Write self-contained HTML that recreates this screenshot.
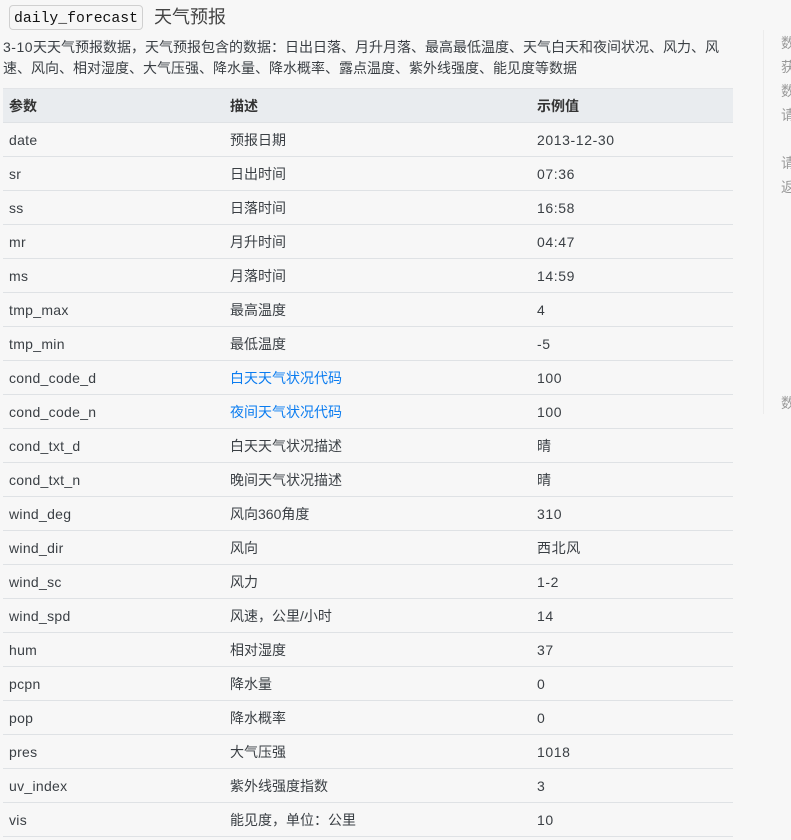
<!DOCTYPE html>
<html lang="zh"><head><meta charset="utf-8"><title>daily_forecast</title>
<style>
html,body{margin:0;padding:0;width:791px;height:840px;overflow:hidden;background:#f7f7f7}
body{position:relative;font-family:"Liberation Sans","Noto Sans CJK SC",sans-serif;font-size:14px;color:#3a3f44}
code{position:absolute;left:9px;top:5px;width:134px;height:25px;box-sizing:border-box;border:1px solid #d0d0d0;border-radius:4px;background:#f6f6f6;font:14.75px/26px "Liberation Mono",monospace;color:#111;text-align:center;overflow:hidden}
h3{position:absolute;left:154px;top:5px;margin:0;font-weight:400;font-size:18px;line-height:24px;color:#444}
p{position:absolute;left:3px;top:37px;margin:0;line-height:21px;white-space:nowrap;width:730px}
p span{letter-spacing:.5px}
table{position:absolute;left:3px;top:88px;width:730px;border-collapse:collapse;table-layout:fixed}
th,td{height:33px;padding:0 6px;border-bottom:1px solid #dfe2e5;text-align:left;white-space:nowrap;line-height:20px}
th{background:#e9ecef;border-top:1px solid #e2e4e7;font-weight:700;color:#333;height:33px}
td:first-child{letter-spacing:.3px}
td:nth-child(3){letter-spacing:.6px}
a{color:#0a7cf0;text-decoration:none}
.r{position:absolute;left:763px;top:30px;width:1px;height:384px;background:#ececec}
.s{position:absolute;left:781px;color:#999;line-height:24px;height:24px;width:10px;overflow:hidden;white-space:nowrap}
</style></head><body>
<code>daily_forecast</code>
<h3>天气预报</h3>
<p><span>3-10</span>天天气预报数据，天气预报包含的数据：日出日落、月升月落、最高最低温度、天气白天和夜间状况、风力、风<br>速、风向、相对湿度、大气压强、降水量、降水概率、露点温度、紫外线强度、能见度等数据</p>
<table><colgroup><col style="width:221px"><col style="width:307px"><col style="width:202px"></colgroup>
<thead><tr><th>参数</th><th>描述</th><th>示例值</th></tr></thead><tbody>
<tr><td>date</td><td>预报日期</td><td>2013-12-30</td></tr>
<tr><td>sr</td><td>日出时间</td><td>07:36</td></tr>
<tr><td>ss</td><td>日落时间</td><td>16:58</td></tr>
<tr><td>mr</td><td>月升时间</td><td>04:47</td></tr>
<tr><td>ms</td><td>月落时间</td><td>14:59</td></tr>
<tr><td>tmp_max</td><td>最高温度</td><td>4</td></tr>
<tr><td>tmp_min</td><td>最低温度</td><td>-5</td></tr>
<tr><td>cond_code_d</td><td><a href="#">白天天气状况代码</a></td><td>100</td></tr>
<tr><td>cond_code_n</td><td><a href="#">夜间天气状况代码</a></td><td>100</td></tr>
<tr><td>cond_txt_d</td><td>白天天气状况描述</td><td>晴</td></tr>
<tr><td>cond_txt_n</td><td>晚间天气状况描述</td><td>晴</td></tr>
<tr><td>wind_deg</td><td>风向360角度</td><td>310</td></tr>
<tr><td>wind_dir</td><td>风向</td><td>西北风</td></tr>
<tr><td>wind_sc</td><td>风力</td><td>1-2</td></tr>
<tr><td>wind_spd</td><td>风速，公里/小时</td><td>14</td></tr>
<tr><td>hum</td><td>相对湿度</td><td>37</td></tr>
<tr><td>pcpn</td><td>降水量</td><td>0</td></tr>
<tr><td>pop</td><td>降水概率</td><td>0</td></tr>
<tr><td>pres</td><td>大气压强</td><td>1018</td></tr>
<tr><td>uv_index</td><td>紫外线强度指数</td><td>3</td></tr>
<tr><td>vis</td><td>能见度，单位：公里</td><td>10</td></tr>
</tbody></table>
<div class="r"></div>
<div class="s" style="top:31px">数</div>
<div class="s" style="top:55px">获</div>
<div class="s" style="top:79px">数</div>
<div class="s" style="top:103px">请</div>
<div class="s" style="top:151px">请</div>
<div class="s" style="top:175px">返</div>
<div class="s" style="top:391px">数</div>
</body></html>
